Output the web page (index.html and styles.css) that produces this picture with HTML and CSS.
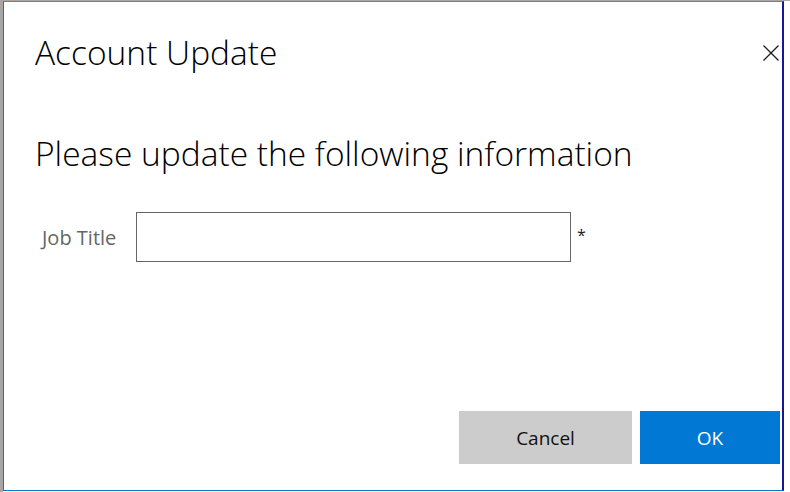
FILE: index.html
```html
<!DOCTYPE html>
<html lang="en">
<head>
<meta charset="utf-8">
<title>Account Update</title>
<link rel="stylesheet" href="styles.css">
</head>
<body>
<div class="backdrop">
  <div class="edge-left"></div>
  <div class="dialog">
    <div class="dialog-header">
      <h1 class="dialog-title">Account Update</h1>
      <button class="close-btn" aria-label="Close">
        <svg width="16" height="16" viewBox="0 0 16 16"><path d="M0.5 0.5 L15.5 15.5 M15.5 0.5 L0.5 15.5" stroke="#1a1a1a" stroke-width="1.3" fill="none"/></svg>
      </button>
    </div>
    <h2 class="dialog-subtitle">Please update the following information</h2>
    <div class="form-row">
      <label class="field-label" for="job">Job Title</label>
      <input class="field-input" id="job" type="text">
      <span class="required">*</span>
    </div>
    <div class="spacer"></div>
    <div class="dialog-footer">
      <button class="btn btn-cancel">Cancel</button>
      <button class="btn btn-ok">OK</button>
    </div>
  </div>
  <div class="edge-right"></div>
</div>
</body>
</html>
```
FILE: styles.css
```css
* { box-sizing: border-box; }
html, body { margin: 0; padding: 0; }
body {
  width: 790px;
  height: 492px;
  overflow: hidden;
  background: #ffffff;
  font-family: "Open Sans", "Liberation Sans", sans-serif;
}
.backdrop {
  display: flex;
  height: 492px;
  border-top: 1px solid #a6a6a6;
}
.edge-left {
  width: 3px;
  background: #a6a6a6;
}
.edge-right {
  width: 6px;
}
.dialog {
  width: 782px;
  height: 490px;
  background: #ffffff;
  border-top: 1px solid #3c8ed8;
  border-left: 1px solid #0b78d0;
  border-bottom: 1px solid #0b78d0;
  border-right: 2px solid #16169a;
  display: flex;
  flex-direction: column;
}
.dialog-header {
  display: flex;
  align-items: center;
  justify-content: space-between;
  padding: 29px 3px 0 31px;
  height: 70px;
}
.dialog-title {
  margin: 0;
  font-weight: 300;
  font-size: 33.5px;
  line-height: 40px;
  color: #000;
}
.close-btn {
  border: 0;
  background: transparent;
  padding: 0;
  width: 16px;
  height: 16px;
  margin-top: 2px;
  display: block;
}
.close-btn svg { display: block; }
.dialog-subtitle {
  margin: 61px 0 0 31px;
  font-weight: 300;
  font-size: 33.5px;
  line-height: 40px;
  color: #000;
}
.form-row {
  display: flex;
  align-items: center;
  margin-top: 39px;
  padding-left: 38px;
}
.field-label {
  width: 94px;
  font-size: 20px;
  color: #666666;
}
.field-input {
  width: 435px;
  height: 50px;
  border: 1px solid #666666;
  margin: 0;
  padding: 0 8px;
  font-size: 16px;
}
.required {
  margin-left: 6px;
  font-size: 16px;
  color: #222;
  margin-top: -4px;
}
.spacer { flex: 1; }
.dialog-footer {
  display: flex;
  justify-content: flex-end;
  gap: 8px;
  padding: 0 2px 26px 0;
}
.btn {
  height: 53px;
  border: 0;
  font-family: "Open Sans", "Liberation Sans", sans-serif;
  font-size: 19px;
}
.btn-cancel {
  width: 173px;
  background: #cccccc;
  color: #111;
}
.btn-ok {
  width: 140px;
  background: #0078d4;
  color: #ffffff;
}
```
